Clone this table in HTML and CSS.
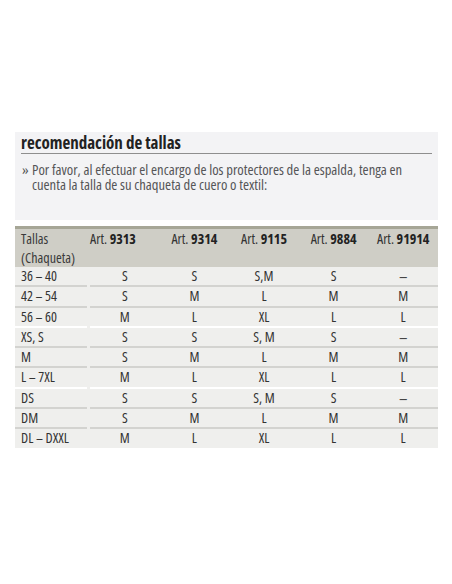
FILE: index.html
```html
<!DOCTYPE html>
<html lang="es">
<head>
<meta charset="utf-8">
<title>recomendación de tallas</title>
<link rel="stylesheet" href="styles.css">
</head>
<body>
<div class="page">
  <section class="panel">
    <h2 class="panel-title">recomendación de tallas</h2>
    <p class="note"><span class="note-mark">»</span><span class="note-text">Por favor, al efectuar el encargo de los protectores de la espalda, tenga en cuenta la talla de su chaqueta de cuero o textil:</span></p>
  </section>

  <div class="sizes">
    <div class="row head">
      <div class="cell first">Tallas<br>(Chaqueta)</div>
      <div class="cell art art-first">Art. <b>9313</b></div>
      <div class="cell art">Art. <b>9314</b></div>
      <div class="cell art">Art. <b>9115</b></div>
      <div class="cell art">Art. <b>9884</b></div>
      <div class="cell art">Art. <b>91914</b></div>
    </div>

    <div class="row">
      <div class="cell first">36 – 40</div>
      <div class="cell">S</div><div class="cell">S</div><div class="cell">S,M</div><div class="cell">S</div><div class="cell dash">–</div>
    </div>
    <div class="row">
      <div class="cell first">42 – 54</div>
      <div class="cell">S</div><div class="cell">M</div><div class="cell">L</div><div class="cell">M</div><div class="cell">M</div>
    </div>
    <div class="row group-end">
      <div class="cell first">56 – 60</div>
      <div class="cell">M</div><div class="cell">L</div><div class="cell">XL</div><div class="cell">L</div><div class="cell">L</div>
    </div>

    <div class="row">
      <div class="cell first">XS, S</div>
      <div class="cell">S</div><div class="cell">S</div><div class="cell">S, M</div><div class="cell">S</div><div class="cell dash">–</div>
    </div>
    <div class="row">
      <div class="cell first">M</div>
      <div class="cell">S</div><div class="cell">M</div><div class="cell">L</div><div class="cell">M</div><div class="cell">M</div>
    </div>
    <div class="row group-end">
      <div class="cell first">L – 7XL</div>
      <div class="cell">M</div><div class="cell">L</div><div class="cell">XL</div><div class="cell">L</div><div class="cell">L</div>
    </div>

    <div class="row">
      <div class="cell first">DS</div>
      <div class="cell">S</div><div class="cell">S</div><div class="cell">S, M</div><div class="cell">S</div><div class="cell dash">–</div>
    </div>
    <div class="row">
      <div class="cell first">DM</div>
      <div class="cell">S</div><div class="cell">M</div><div class="cell">L</div><div class="cell">M</div><div class="cell">M</div>
    </div>
    <div class="row last">
      <div class="cell first">DL – DXXL</div>
      <div class="cell">M</div><div class="cell">L</div><div class="cell">XL</div><div class="cell">L</div><div class="cell">L</div>
    </div>
  </div>
</div>
</body>
</html>
```
FILE: styles.css
```css
html, body {
  margin: 0;
  padding: 0;
  background: #ffffff;
}

body {
  font-family: "Open Sans", "DejaVu Sans", sans-serif;
  font-stretch: 75%;
  color: #333333;
}

.page {
  width: 423px;
  margin: 0 0 0 15px;
  padding-top: 132px;
}

.panel {
  background: #f3f3f5;
  height: 88px;
  box-sizing: border-box;
  padding: 1px 6px 0;
}

.panel-title {
  margin: 0;
  font-size: 17px;
  line-height: 20px;
  font-weight: 700;
  color: #222222;
  border-bottom: 1px solid #8e8e8e;
}

.note {
  margin: 8px 0 0;
  display: flex;
  font-size: 14.6px;
  line-height: 15px;
  color: #555557;
}

.note-mark {
  flex: 0 0 10px;
  padding-left: 1px;
}

.note-text {
  flex: 1;
}

.sizes {
  margin-top: 6px;
  border-top: 3px solid #a6a696;
}

.row {
  display: grid;
  grid-template-columns: 75px repeat(5, 1fr);
  background: #efefed;
  font-size: 14px;
  line-height: 18.3px;
  color: #333333;
}

.row .cell {
  text-align: center;
  border-bottom: 2px solid #d3d3d0;
}

.row .cell.first {
  text-align: left;
  padding-left: 6px;
  margin-right: 3px;
}

.row .cell.dash {
  font-size: 17px;
  color: #444444;
}

.row.group-end .cell {
  border-bottom-color: #ffffff;
}

.row.last .cell {
  border-bottom: 0;
}

.row.head {
  background: #cfcec6;
  height: 38px;
  box-sizing: border-box;
  padding-top: 0;
  line-height: 19px;
  font-size: 14px;
  color: #333333;
}

.row.head .cell {
  border-bottom: 0;
}

.row.head .cell.first {
  color: #3a3a3a;
}

.row.head .art b {
  font-weight: 700;
  color: #222222;
}

.row.head .art-first {
  text-align: left;
}
```
